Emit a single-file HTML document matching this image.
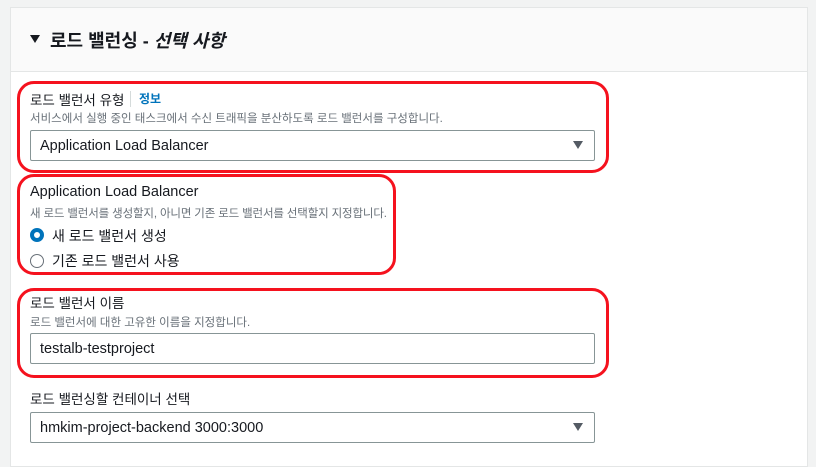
<!DOCTYPE html>
<html><head><meta charset="utf-8"><style>
*{box-sizing:border-box;margin:0;padding:0}
body{width:816px;height:450px;overflow:hidden;background:#f2f3f3;font-family:"Liberation Sans","Noto Sans CJK KR",sans-serif;color:#16191f;position:relative}
.panel{position:absolute;left:10px;top:7px;width:798px;height:460px;background:#fff;border:1px solid #e4e6e6}
.hdr{position:absolute;left:0;top:0;width:100%;height:64px;background:#fafafa;border-bottom:1px solid #e4e6e6}
.a{position:absolute;white-space:nowrap}
.lbl{font-size:13.5px;color:#16191f}
.desc{font-size:11.5px;color:#687078}
.box{position:absolute;border:1px solid #879596;border-radius:2px;background:#fff;font-size:14.5px;padding-left:9px;padding-top:2px;line-height:27px}
.tri{position:absolute;right:11px;top:10px;width:0;height:0;border-left:5.5px solid transparent;border-right:5.5px solid transparent;border-top:8px solid #545b64}
.red{position:absolute;border:3px solid #f5121e;border-radius:17px}
.radio{position:absolute;width:14px;height:14px;border-radius:50%}
</style></head><body>
<div class="panel"><div class="hdr"></div></div>
<div class="a" style="left:30px;top:35px;width:0;height:0;border-left:5.5px solid transparent;border-right:5.5px solid transparent;border-top:8px solid #16191f"></div>
<div class="a" style="left:50px;top:27px;font-size:18px;font-weight:bold">로드 밸런싱 - <i>선택 사항</i></div>

<div class="a lbl" style="left:30px;top:89px">로드 밸런서 유형</div>
<div class="a" style="left:130px;top:91px;width:1px;height:16px;background:#d5dbdb"></div>
<div class="a" style="left:139px;top:90px;font-size:12px;font-weight:bold;color:#0073bb">정보</div>
<div class="a desc" style="left:30px;top:110px">서비스에서 실행 중인 태스크에서 수신 트래픽을 분산하도록 로드 밸런서를 구성합니다.</div>
<div class="box" style="left:30px;top:130px;width:565px;height:31px">Application Load Balancer<div class="tri"></div></div>

<div class="a" style="left:30px;top:184px;font-size:14.5px">Application Load Balancer</div>
<div class="a desc" style="left:30px;top:205px;letter-spacing:-0.15px">새 로드 밸런서를 생성할지, 아니면 기존 로드 밸런서를 선택할지 지정합니다.</div>
<div class="radio" style="left:30px;top:228px;border:4px solid #0073bb;background:#fff"></div>
<div class="a" style="left:52px;top:226px;font-size:14px">새 로드 밸런서 생성</div>
<div class="radio" style="left:30px;top:254px;border:1px solid #687078;background:#fff"></div>
<div class="a" style="left:52px;top:251px;font-size:14px">기존 로드 밸런서 사용</div>

<div class="a lbl" style="left:30px;top:292px">로드 밸런서 이름</div>
<div class="a desc" style="left:30px;top:314px">로드 밸런서에 대한 고유한 이름을 지정합니다.</div>
<div class="box" style="left:30px;top:333px;width:565px;height:31px">testalb-testproject</div>

<div class="a lbl" style="left:30px;top:388px">로드 밸런싱할 컨테이너 선택</div>
<div class="box" style="left:30px;top:412px;width:565px;height:31px">hmkim-project-backend 3000:3000<div class="tri"></div></div>

<div class="red" style="left:17px;top:81px;width:592px;height:92px"></div>
<div class="red" style="left:17px;top:174px;width:379px;height:101px"></div>
<div class="red" style="left:17px;top:288px;width:592px;height:90px"></div>
</body></html>
